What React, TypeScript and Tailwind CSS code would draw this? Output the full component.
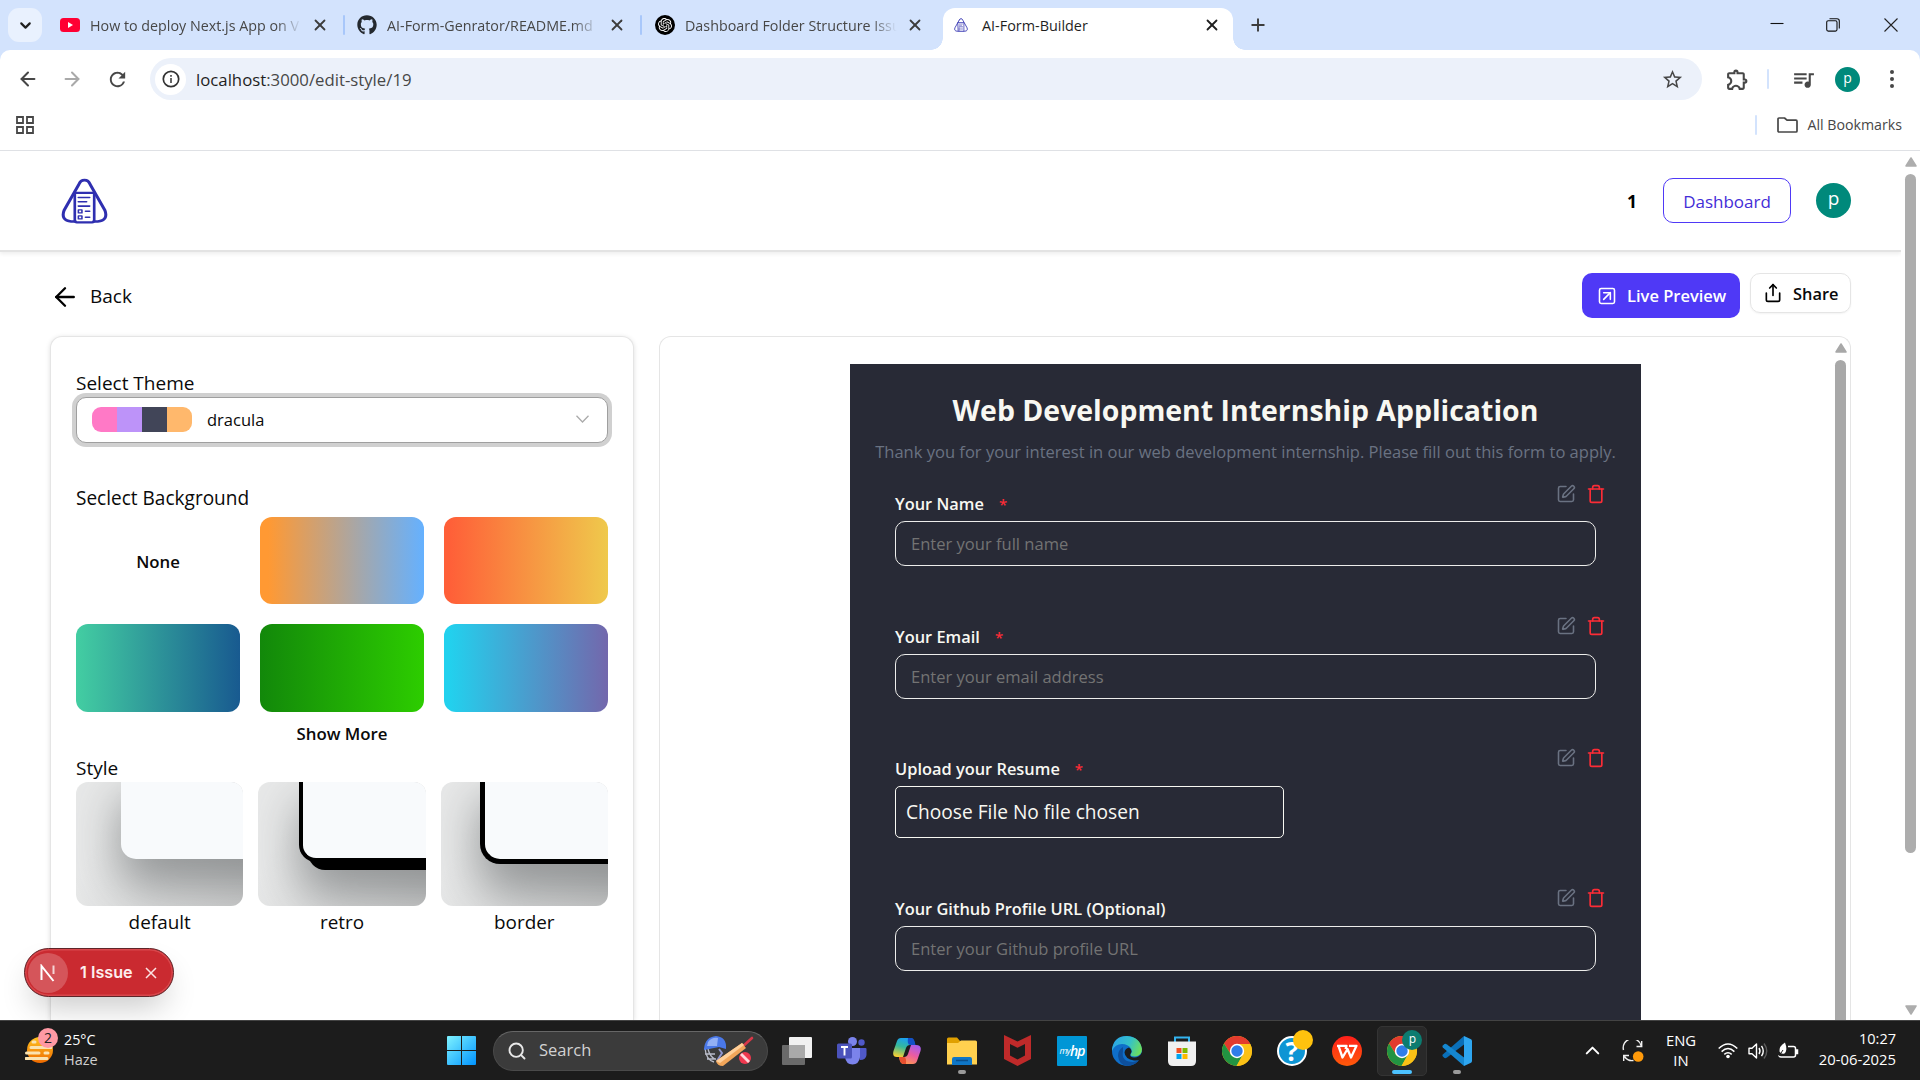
import type { ReactNode } from "react";
import {
  ArrowLeft,
  ArrowRight,
  ChevronDown,
  ChevronUp,
  Search,
  Share,
  SquareArrowUpRight,
  SquarePen,
  Trash,
  X,
} from "lucide-react";
import { FaGithub } from "react-icons/fa";
import { SiOpenai } from "react-icons/si";
import { MdOutlineExtension, MdQueueMusic, MdRefresh, MdStarBorder } from "react-icons/md";

/* ---------- logo ---------- */

function FormLogo({ className }: { className: string }) {
  return (
    <svg viewBox="0 0 46 54" preserveAspectRatio="none" className={className} fill="none" stroke="#2f2fb0" strokeLinecap="round" strokeLinejoin="round">
      <path d="M17.500 7.500Q19 2.500 23 2.500T28.500 7.500L43 38Q46.500 49.500 36 51H32M17.500 7.500L3 38Q-.5 49.500 10 51H14" strokeWidth="3" />
      <path d="M13.500 17.500H32.500V50Q32.500 52 30.500 52H15.500Q13.500 52 13.500 50Z" strokeWidth="2.600" />
      <path d="M17 23H28M17 28H25M17 33H28M24 39H28M24 46H28" strokeWidth="1.800" />
      <path d="M17 37.500H20.500V41H17ZM17 44.500H20.500V48H17Z" strokeWidth="1.500" />
    </svg>
  );
}

/* ---------- browser chrome ---------- */

function Tab({ icon, title, width }: { icon: ReactNode; title: string; width: string }) {
  return (
    <div className={`flex h-[34px] items-center ${width}`}>
      <div className="flex w-5 shrink-0 justify-center">{icon}</div>
      <div className="ml-[10px] w-[216px] shrink-0 whitespace-nowrap pt-px text-[14.300px] text-[#474747] [mask-image:linear-gradient(to_right,black_86%,transparent_98%)]">
        {title}
      </div>
      <X className="ml-[5px] size-[18px] shrink-0 text-[#3c3c3c]" strokeWidth={2.400} />
    </div>
  );
}

function TabDivider() {
  return <div className="h-5 w-[2px] rounded-full bg-[#a8c7fa]" />;
}

function TabStrip() {
  return (
    <div className="flex h-[50px] shrink-0 items-end bg-[#d3e3fd]">
      <div className="mb-2 flex w-[943px] items-center">
        <div className="ml-2 flex size-[34px] items-center justify-center rounded-[11px] bg-[#e9f1fe]">
          <ChevronDown className="size-[17px] text-[#1f1f1f]" strokeWidth={3} />
        </div>
        <div className="w-[18px]" />
        <Tab
          width="w-[283px]"
          title="How to deploy Next.js App on V"
          icon={
            <svg viewBox="0 0 20 14" className="h-[14px] w-5">
              <rect width="20" height="14" rx="3.500" fill="#ff0033" />
              <path d="M8 4L13 7L8 10Z" fill="#fff" />
            </svg>
          }
        />
        <TabDivider />
        <div className="w-[12px]" />
        <Tab width="w-[283px]" title="AI-Form-Genrator/README.md" icon={<FaGithub className="size-5 text-[#24292f]" />} />
        <TabDivider />
        <div className="w-[13px]" />
        <Tab
          width="w-[280px]"
          title="Dashboard Folder Structure Issu"
          icon={
            <span className="flex size-5 items-center justify-center rounded-full bg-black">
              <SiOpenai className="size-[14px] text-white" />
            </span>
          }
        />
      </div>
      <div className="relative flex h-[42px] w-[290px] items-center rounded-t-[12px] bg-white pb-2">
        <div className="absolute -left-3 bottom-0 size-3 bg-[radial-gradient(circle_at_0_0,transparent_11.500px,white_12px)]" />
        <div className="absolute -right-3 bottom-0 size-3 bg-[radial-gradient(circle_at_100%_0,transparent_11.500px,white_12px)]" />
        <FormLogo className="ml-[11px] h-[14px] w-[14px]" />
        <span className="ml-[14px] pt-px text-[14.400px] text-[#1f1f1f]">AI-Form-Builder</span>
        <X className="ml-auto mr-[12px] size-[18px] text-[#1f1f1f]" strokeWidth={2.400} />
      </div>
      <div className="mb-2 flex h-[34px] flex-1 items-center">
        <svg viewBox="0 0 14 14" className="ml-[18px] size-[14px]" stroke="#3c3c3c" strokeWidth="1.900">
          <path d="M7 .5V13.500M.5 7H13.500" />
        </svg>
      </div>
      <div className="mb-2 flex h-[34px] items-center">
        <svg viewBox="0 0 14 14" className="size-[14px]" stroke="#111" strokeWidth="1.100">
          <path d="M.5 5.500H13.500" />
        </svg>
        <svg viewBox="0 0 14 14" className="ml-[42px] size-[14px]" stroke="#111" strokeWidth="1.100" fill="none">
          <rect x=".7" y="2.800" width="10.300" height="10.300" rx="1.500" />
          <path d="M3.500 .7H11Q13.300 .7 13.300 3V10.500" />
        </svg>
        <svg viewBox="0 0 14 14" className="ml-[44px] mr-[22px] size-[14px]" stroke="#222" strokeWidth="1.100">
          <path d="M.5 .5L13.500 13.500M13.500 .5L.5 13.500" />
        </svg>
      </div>
    </div>
  );
}

function Toolbar() {
  return (
    <div className="shrink-0 bg-[#d3e3fd]">
      <div className="h-[101px] rounded-t-[10px] border-b border-[#dfe1e5] bg-white">
        <div className="flex h-[58px] items-center">
          <ArrowLeft className="ml-[17px] size-[22px] text-[#474747]" strokeWidth={2.200} />
          <ArrowRight className="ml-[22px] size-[22px] text-[#a9a9a9]" strokeWidth={2.200} />
          <MdRefresh className="ml-[23px] size-[23px] text-[#474747]" />
          <div className="ml-[21px] flex h-[42px] w-[1552px] items-center rounded-full bg-[#ecf1fa]">
            <div className="ml-[5px] flex size-[31px] items-center justify-center rounded-full bg-white">
              <svg viewBox="0 0 18 18" className="size-[18px]" fill="none" stroke="#333" strokeWidth="1.700">
                <circle cx="9" cy="9" r="7.700" />
                <path d="M9 8V13M9 5V6.700" strokeWidth="1.500" />
              </svg>
            </div>
            <span className="ml-[10px] pt-px text-[16.750px] text-[#474747]">
              <span className="text-[#1f1f1f]">localhost</span>:3000/edit-style/19
            </span>
            <MdStarBorder className="ml-auto mr-[18px] size-[23px] text-[#474747]" />
          </div>
          <MdOutlineExtension className="ml-[23px] size-[25px] text-[#474747]" />
          <div className="ml-[17px] h-5 w-[2px] rounded bg-[#d3e3fd]" />
          <MdQueueMusic className="ml-[22px] size-[25px] text-[#474747]" />
          <div className="ml-[19px] flex size-[25px] items-center justify-center rounded-full bg-[#00897b] pb-[3px] text-[14px] text-white">p</div>
          <svg viewBox="0 0 4 18" className="ml-[30px] h-[18px] w-1 text-[#474747]" fill="#474747">
            <circle cx="2" cy="2" r="2" />
            <circle cx="2" cy="9" r="2" />
            <circle cx="2" cy="16" r="2" />
          </svg>
        </div>
        <div className="flex h-[34px] items-center">
          <svg viewBox="0 0 18 18" className="ml-[16px] size-[18px]" fill="none" stroke="#474747" strokeWidth="1.800">
            <path d="M1 1H7V7H1ZM11 1H17V7H11ZM1 11H7V17H1ZM11 11H17V17H11Z" />
          </svg>
          <div className="ml-auto h-5 w-[2px] rounded bg-[#d3e3fd]" />
          <svg viewBox="0 0 21 16" className="ml-5 h-4 w-[21px]" fill="none" stroke="#474747" strokeWidth="1.700">
            <path d="M1 2Q1 1 2 1H7.500L10 3.200H19Q20 3.200 20 4.200V14Q20 15 19 15H2Q1 15 1 14Z" strokeLinejoin="round" />
          </svg>
          <span className="ml-[9px] mr-[18px] text-[14.200px] text-[#474747]">All Bookmarks</span>
        </div>
      </div>
    </div>
  );
}

/* ---------- page ---------- */

function PageHeader() {
  return (
    <div className="flex h-[101px] shrink-0 items-center border-b-2 border-[#e3e3e3] bg-white shadow-[0_2px_4px_rgba(0,0,0,0.07)]">
      <FormLogo className="ml-[61px] h-[46px] w-[47px]" />
      <span className="ml-auto pt-px text-[17.500px] font-bold text-black">1</span>
      <div className="ml-[26px] flex h-[45px] w-[128px] items-center justify-center rounded-[10px] border border-[#4f39f6] pt-[2px] text-[17px] font-medium text-[#432dd7]">
        Dashboard
      </div>
      <div className="ml-[25px] mr-[50px] flex size-[35px] items-center justify-center rounded-full bg-[#00897b] pb-[4px] text-[19px] text-white">p</div>
    </div>
  );
}

function ActionRow() {
  return (
    <div className="flex h-[84px] shrink-0 items-start pt-[21px]">
      <div className="ml-[50px] flex h-[47px] items-center">
        <ArrowLeft className="size-[30px] text-black" strokeWidth={1.900} />
        <span className="ml-[10px] text-[19px] text-[#0a0a0a]">Back</span>
      </div>
      <div className="ml-auto flex h-[45px] w-[158px] items-center rounded-[10px] bg-[#4f39f6] pl-[15px] text-white">
        <SquareArrowUpRight className="size-5" strokeWidth={1.900} />
        <span className="ml-[10px] pt-[2px] text-[16.500px] font-semibold">Live Preview</span>
      </div>
      <div className="ml-[10px] mr-[50px] flex h-10 w-[101px] items-center rounded-[10px] border border-[#e5e5e5] pl-[12px] shadow-[0_1px_2px_rgba(0,0,0,0.05)]">
        <Share className="size-5 text-black" strokeWidth={2} />
        <span className="ml-[10px] pt-[2px] text-[16.400px] font-semibold text-[#0a0a0a]">Share</span>
      </div>
    </div>
  );
}

const gradients = [
  "bg-[linear-gradient(90deg,#ff9933_5%,#65b1ff_100%)]",
  "bg-[linear-gradient(90deg,#ff5f38_3%,#efc94c_100%)]",
  "bg-[linear-gradient(90deg,#43cea2,#185a90)]",
  "bg-[linear-gradient(90deg,#12880a,#2dcd00)]",
  "bg-[linear-gradient(90deg,#22d1ee_3%,#7367ac_100%)]",
];

const stylePreviews = [
  {
    name: "default",
    pad: "pl-[45px]",
    panel: "h-[77px] rounded-bl-[15px] shadow-[4px_22px_46px_6px_rgba(80,84,86,0.5)]",
  },
  {
    name: "retro",
    pad: "pl-[41px]",
    panel: "h-[80px] rounded-bl-[17px] border-b-[4px] border-l-[4px] border-black shadow-[9px_8px_0_0_#000,6px_28px_46px_6px_rgba(80,84,86,0.5)]",
  },
  {
    name: "border",
    pad: "pl-[39px]",
    panel: "h-[82px] rounded-bl-[20px] border-b-[5px] border-l-[5px] border-black shadow-[4px_24px_46px_6px_rgba(80,84,86,0.5)]",
  },
];

function ThemePanel() {
  return (
    <div className="flex w-[584px] shrink-0 flex-col rounded-t-[12px] border-x border-t border-[#e5e5e5] bg-white px-[25px] pt-[32px] text-[#0a0a0a] shadow-[0_1px_5px_rgba(0,0,0,0.13)]">
      <div className="flex h-[28px] items-center text-[19px]">Select Theme</div>
      <div className="flex h-[46px] items-center rounded-[10px] border border-[#9f9f9f] bg-white pl-[15px] shadow-[0_0_0_4px_#d0d0d0]">
        <div className="mb-px flex h-[25px] overflow-hidden rounded-[9px]">
          <div className="w-[25px] bg-[#ff79c6]" />
          <div className="w-[25px] bg-[#bd93f9]" />
          <div className="w-[25px] bg-[#414558]" />
          <div className="w-[25px] bg-[#ffb86c]" />
        </div>
        <span className="ml-[15px] pt-px text-[16.500px]">dracula</span>
        <svg viewBox="0 0 13 8" className="mb-[2px] ml-auto mr-[18px] h-2 w-[13px]" fill="none" stroke="#ababab" strokeWidth="1.300">
          <path d="M.5 .7L6.500 7L12.500 .7" />
        </svg>
      </div>
      <div className="mt-[40px] flex h-[30px] items-center text-[19.050px]">Seclect Background</div>
      <div className="mt-[4px] grid grid-cols-3 grid-rows-[87px_88px] gap-x-5 gap-y-[20px]">
        <div className="flex items-center justify-center pt-[2px] text-[16.800px] font-semibold">None</div>
        {gradients.map((g) => (
          <div key={g} className={`rounded-[12px] ${g}`} />
        ))}
      </div>
      <div className="flex h-[43px] items-center justify-center text-[16.850px] font-semibold">Show More</div>
      <div className="flex h-[27px] items-center text-[19px]">Style</div>
      <div className="grid grid-cols-3 gap-x-[15px]">
        {stylePreviews.map((s) => (
          <div key={s.name} className="flex flex-col items-center">
            <div className={`h-[124px] w-full overflow-hidden rounded-[12px] bg-[linear-gradient(115deg,#e8e9e9_20%,#cfd0d0_100%)] ${s.pad}`}>
              <div className={`w-[190px] bg-[#f8fafc] ${s.panel}`} />
            </div>
            <div className="flex h-[33px] items-center text-[18.900px]">{s.name}</div>
          </div>
        ))}
      </div>
    </div>
  );
}

function FieldHeader({ label, required, iconOffset = "-mt-[2px]" }: { label: string; required?: boolean; iconOffset?: string }) {
  return (
    <div className="flex h-[36px] justify-between">
      <div className="flex h-[38px] items-center text-[16.400px] font-semibold text-[#f8f8f2]">
        {label}
        {required && <span className="ml-[15px] text-[15px] text-[#fb2c36]">*</span>}
      </div>
      <div className={`-mr-[10px] flex gap-[10px] ${iconOffset}`}>
        <SquarePen className="size-5 text-[#6a7282]" strokeWidth={1.900} />
        <Trash className="size-5 text-[#fb2c36]" strokeWidth={2} />
      </div>
    </div>
  );
}

function TextField(props: { label: string; placeholder: string; required?: boolean; iconOffset?: string }) {
  return (
    <div>
      <FieldHeader label={props.label} required={props.required} iconOffset={props.iconOffset} />
      <div className="flex h-[45px] items-center rounded-[10px] border border-[#ededeb] pl-[15px] pt-[2px] text-[16.550px] text-[#737373]">
        {props.placeholder}
      </div>
    </div>
  );
}

function FormPanel() {
  return (
    <div className="ml-[25px] flex w-[1192px] shrink-0 rounded-t-[12px] border-x border-t border-[#e5e5e5]">
      <div className="ml-[190px] mt-[27px] w-[791px] shrink-0 bg-[#282a36]">
        <h1 className="flex h-[73px] items-end justify-center text-[28.450px] font-bold leading-[54px] text-[#f8f8f2]">Web Development Internship Application</h1>
        <p className="flex h-[30px] items-center justify-center whitespace-nowrap text-[16.550px] text-[#6a7282]">
          Thank you for your interest in our web development internship. Please fill out this form to apply.
        </p>
        <div className="mx-[45px] mt-[18px] flex flex-col gap-[52px]">
          <TextField label="Your Name" placeholder="Enter your full name" required iconOffset="-mt-px" />
          <TextField label="Your Email" placeholder="Enter your email address" required />
          <div className="-mt-px">
            <FieldHeader label="Upload your Resume" required />
            <div className="flex h-[52px] w-[389px] items-center rounded-[5px] border border-[#f8f8f2] pl-[10px] pt-px text-[19.150px] text-[#f8f8f2]">
              Choose File No file chosen
            </div>
          </div>
          <TextField label="Your Github Profile URL (Optional)" placeholder="Enter your Github profile URL" />
        </div>
      </div>
      <div className="ml-auto mr-[3px] flex w-[12px] flex-col pt-[6px]">
        <svg viewBox="0 0 12 10" className="h-[10px] w-3">
          <path d="M6 1L11 9H1Z" fill="#a8a8a8" stroke="#a8a8a8" strokeWidth="1.500" strokeLinejoin="round" />
        </svg>
        <div className="mt-[7px] w-[11px] flex-1 rounded-t-full bg-[#a8a8a8]" />
      </div>
    </div>
  );
}

function PageScrollbar() {
  return (
    <div className="flex w-[19px] shrink-0 flex-col items-center bg-white pt-[6px]">
      <svg viewBox="0 0 12 10" className="h-[10px] w-3">
        <path d="M6 1L11 9H1Z" fill="#adadad" stroke="#adadad" strokeWidth="1.500" strokeLinejoin="round" />
      </svg>
      <div className="mt-[7px] h-[679px] w-[11px] rounded-full bg-[#adadad]" />
      <svg viewBox="0 0 12 10" className="mb-[5px] mt-auto h-[10px] w-3">
        <path d="M6 9L11 1H1Z" fill="#adadad" stroke="#adadad" strokeWidth="1.500" strokeLinejoin="round" />
      </svg>
    </div>
  );
}

function IssueBadge() {
  return (
    <div className="absolute bottom-[23px] left-6 flex h-[49px] w-[150px] items-center rounded-full border-[1.500px] border-[#5e2428] bg-[#ca2a30] shadow-[inset_0_0_0_1.500px_#d8474c,0_16px_32px_-8px_rgba(0,0,0,0.24)]">
      <div className="ml-[3px] flex size-[40px] items-center justify-center rounded-full bg-[#d5555a]">
        <svg viewBox="0 0 18 18" className="size-[18px]" fill="none" stroke="#fff" strokeWidth="2">
          <path d="M2.500 16V2L14.500 17" />
          <path d="M14.500 1.500V10" opacity=".75" />
        </svg>
      </div>
      <span className="ml-[12px] font-['Inter'] text-[16.200px] font-semibold text-[#fdeeee]">1 Issue</span>
      <svg viewBox="0 0 12 12" className="ml-[12px] size-[12px]" stroke="#fbe4e4" strokeWidth="1.500">
        <path d="M1 1L11 11M11 1L1 11" />
      </svg>
    </div>
  );
}

/* ---------- taskbar ---------- */

function ChromeIcon() {
  return (
    <svg viewBox="0 0 30 30" className="size-[30px]">
      <circle cx="15" cy="15" r="15" fill="#fbc116" />
      <path d="M15 8H28.300A15 15 0 0 0 2 7.500L9 18.500Z" fill="#e33b2e" />
      <path d="M2 7.500A15 15 0 0 0 14.500 30L21 18.500L15 22L9 18.500Z" fill="#229342" />
      <path d="M21 18.500L14.500 30A15 15 0 0 0 28.300 8H15Z" fill="#fbc116" />
      <circle cx="15" cy="15" r="7.200" fill="#fff" />
      <circle cx="15" cy="15" r="5.700" fill="#2f7de9" />
    </svg>
  );
}

function WindowsIcon() {
  return (
    <svg viewBox="0 0 29 29" className="size-[29px]">
      <defs>
        <linearGradient id="win" x1="0" y1="0" x2="1" y2="1">
          <stop offset="0" stopColor="#7ff3ff" />
          <stop offset="1" stopColor="#0093ff" />
        </linearGradient>
      </defs>
      <path d="M1 0H14V14H0V1Q0 0 1 0ZM15 0H28Q29 0 29 1V14H15ZM0 15H14V29H1Q0 29 0 28ZM15 15H29V28Q29 29 28 29H15Z" fill="url(#win)" />
    </svg>
  );
}

function CricketArt() {
  return (
    <svg viewBox="0 0 52 32" className="h-8 w-[52px]">
      <path d="M2 13Q3 25 11 27M5 14Q7 22 12 24M2 19H12M4 24H13" stroke="#b9bcc9" strokeWidth="1.300" fill="none" />
      <path d="M16 14L19 18L14 26" stroke="#8f97cf" strokeWidth="2" fill="none" />
      <path d="M1 14Q2 2 13 1Q24 2 23 14L16 12L1 15Z" fill="#4a78e8" />
      <path d="M5 7Q9 2 15 3L14 11H4Z" fill="#93b0f5" />
      <path d="M38 13L49 3" stroke="#d83848" strokeWidth="2.600" strokeLinecap="round" />
      <path d="M39 8L43 13L20 31Q14 31 13 26Z" fill="#f2a65a" />
      <path d="M39 8L41 10L17 28L13 26Z" fill="#ffd09a" />
      <circle cx="42" cy="23" r="6" fill="#f0384e" />
      <path d="M38 19L46 27" stroke="#ffd5da" strokeWidth="2.800" />
    </svg>
  );
}

function TaskViewIcon() {
  return (
    <svg viewBox="0 0 30 28" className="h-7 w-[30px]">
      <rect x="7" width="23" height="21" rx="1" fill="#f1f1f1" />
      <rect y="8" width="23" height="20" rx="1" fill="#6a6a6a" />
      <path d="M7 8H23V21H7Z" fill="#a9a9a9" />
    </svg>
  );
}

function TeamsIcon() {
  return (
    <svg viewBox="0 0 30 28" className="h-7 w-[30px]">
      <circle cx="24.500" cy="5.500" r="3.200" fill="#5059c9" />
      <path d="M20 11H28.500Q29.500 11 29.500 12V18Q29 23 23 23Z" fill="#5059c9" />
      <circle cx="15.500" cy="4.500" r="4.500" fill="#7b83eb" />
      <path d="M8 11H23V20Q22 27.500 15.500 27.500T8 20Z" fill="#7b83eb" />
      <rect y="6.500" width="15" height="15" rx="1.500" fill="#4b53bc" />
      <path d="M4 10H11M7.500 10V18.500" stroke="#fff" strokeWidth="1.900" />
    </svg>
  );
}

function CopilotIcon() {
  return (
    <svg viewBox="0 0 28 28" className="size-7">
      <defs>
        <linearGradient id="cpA" x1="0.500" y1="0" x2="0.200" y2="1">
          <stop offset="0" stopColor="#1aa0f2" />
          <stop offset=".45" stopColor="#35b99a" />
          <stop offset="1" stopColor="#ffd02f" />
        </linearGradient>
        <linearGradient id="cpB" x1="0.800" y1="0" x2="0.300" y2="1">
          <stop offset="0" stopColor="#a35cf2" />
          <stop offset=".5" stopColor="#ec5ca0" />
          <stop offset="1" stopColor="#ff9a4d" />
        </linearGradient>
      </defs>
      <path d="M8 1H18Q20 1 21 4L22 8H17Q14 8 13 11L10 20H4Q-1 20 .5 14L4 4Q5 1 8 1Z" fill="url(#cpA)" />
      <path d="M15 1H18.500Q20.500 1 21.500 4L22.500 8H17Q14 8 15 1Z" fill="#1450c8" />
      <path d="M18 8H23Q29 8 27.500 14L24 24Q23 27 20 27H10Q8 27 7 24L6 20H11Q14 20 15 17Z" fill="url(#cpB)" />
      <path d="M6 20H11Q13.500 20 13 27H10Q8 27 7 24Z" fill="#e8502f" />
    </svg>
  );
}

function FolderIcon() {
  return (
    <svg viewBox="0 0 30 28" className="h-7 w-[30px]">
      <path d="M0 2Q0 .5 1.500 .5H10L13 4H15V10H0Z" fill="#e0a000" />
      <path d="M0 6H11L14 3.500H28.500Q30 3.500 30 5V27.500H0Z" fill="#ffd04f" />
      <path d="M5 28V22Q5 20 7 20H23Q25 20 25 22V28Z" fill="#0f76c6" />
      <path d="M9 23.500H21" stroke="#0a4f8c" strokeWidth="1.500" />
    </svg>
  );
}

function McAfeeIcon() {
  return (
    <svg viewBox="0 0 27 31" className="h-[31px] w-[27px]">
      <path d="M0 0L13.500 6.500L27 0V24L13.500 31L0 24ZM6 9V20.500L13.500 24.500L21 20.500V9L13.500 12.800Z" fill="#bf2a2a" fillRule="evenodd" />
    </svg>
  );
}

function EdgeIcon() {
  return (
    <svg viewBox="0 0 30 30" className="size-[30px]">
      <defs>
        <linearGradient id="edT" x1="0" y1="0.300" x2="1" y2="0.600">
          <stop offset="0" stopColor="#2aa5e8" />
          <stop offset=".55" stopColor="#35c1c8" />
          <stop offset="1" stopColor="#6fe05a" />
        </linearGradient>
      </defs>
      <circle cx="15" cy="15" r="15" fill="#0f6fc9" />
      <path d="M11 15Q9 26 21 26Q25 26 28 23Q23 30 15 30Q7 29 6 20Q6 14 11 11Z" fill="#0d4f9c" />
      <path d="M0 13Q2 0 15 0Q28 1 30 13Q30 20 23 20.500Q18 20.500 18.500 18Q21 16 19 12.500Q16 8 10 8Q3 8 0 15Z" fill="url(#edT)" />
      <path d="M18.500 18Q17 21 22 21.500Q28 21.500 30.500 15L30.500 22Q27 25 22 24.500Q13 23 12.500 16.500Q13 12.500 17 11.500Q21 14 18.500 18Z" fill="#1c1c1c" />
    </svg>
  );
}

function StoreIcon() {
  return (
    <svg viewBox="0 0 30 30" className="size-[30px]">
      <path d="M8 6V1.500H22V6" fill="none" stroke="#33b4f0" strokeWidth="2" />
      <path d="M1 5.500H29V25Q29 30 24 30H6Q1 30 1 25Z" fill="#f0f0f0" />
      <rect x="9.500" y="12" width="5" height="5" fill="#f25022" />
      <rect x="15.500" y="12" width="5" height="5" fill="#7fba00" />
      <rect x="9.500" y="18" width="5" height="5" fill="#00a4ef" />
      <rect x="15.500" y="18" width="5" height="5" fill="#ffb900" />
    </svg>
  );
}

function HelpIcon() {
  return (
    <div className="relative flex size-[30px] items-center justify-center rounded-full border-[2px] border-white bg-[#0d95d4] text-[27px] font-bold leading-[26px] text-white">
      ?
      <div className="absolute -right-[8px] -top-[8px] size-5 rounded-full bg-[#ffc20e]" />
    </div>
  );
}

function WpsIcon() {
  return (
    <svg viewBox="0 0 30 30" className="size-[30px]">
      <defs>
        <linearGradient id="wps" x1="0" y1="0" x2="0" y2="1">
          <stop offset="0" stopColor="#ff1f1a" />
          <stop offset="1" stopColor="#ff5a0a" />
        </linearGradient>
      </defs>
      <circle cx="15" cy="15" r="15" fill="url(#wps)" />
      <path d="M5 9.800H14.500L13.500 13M6.500 10L10.500 21.500L15.500 13L19 21.500L24.500 9.800H17" fill="none" stroke="#fff" strokeWidth="2.300" strokeLinejoin="round" />
    </svg>
  );
}

function VsCodeIcon() {
  return (
    <svg viewBox="0 0 30 30" className="size-[30px]">
      <path d="M22 0L.8 18.500Q0 19.500 .8 20.500L2.500 22Q3.500 22.500 5 21.500L24 7Z" fill="#0a6fb8" />
      <path d="M22 30L.8 11.500Q0 10.500 .8 9.500L2.500 8Q3.500 7.500 5 8.500L24 23Z" fill="#1587d0" />
      <path d="M22 0L28.500 3Q30 3.700 30 5V25Q30 26.300 28.500 27L22 30Z" fill="#2ea6f0" />
    </svg>
  );
}

function TaskItem({ children, indicator }: { children: ReactNode; indicator?: string }) {
  return (
    <div className="relative flex h-[60px] w-[54.950px] items-center justify-center">
      {children}
      {indicator && <div className={`absolute bottom-[7px] h-1 rounded-full ${indicator}`} />}
    </div>
  );
}

function Taskbar() {
  return (
    <div className="flex h-[60px] shrink-0 items-center border-t border-[#434343] bg-[#1c1c1c]">
      <div className="relative ml-[25px] mt-[-4px]">
        <svg viewBox="0 0 28 30" className="h-[30px] w-7">
          <defs>
            <linearGradient id="sun" x1="0" y1="0" x2="0" y2="1">
              <stop offset="0" stopColor="#ffc31f" />
              <stop offset="1" stopColor="#ee6a00" />
            </linearGradient>
          </defs>
          <circle cx="15" cy="16" r="13" fill="url(#sun)" />
          <path d="M8 8H10M6 13.500H26M1.500 19H14M20 19H23M1 24.500H22" stroke="#fbe3b0" strokeWidth="3" strokeLinecap="round" />
        </svg>
        <div className="absolute -right-[5px] -top-[6px] flex size-5 items-center justify-center rounded-full bg-[#ff99a4] text-[14px] text-[#222]">2</div>
      </div>
      <div className="-mt-px ml-[11px] flex flex-col leading-5">
        <span className="text-[14.300px] text-white">25°C</span>
        <span className="text-[14.500px] text-[#cfcfcf]">Haze</span>
      </div>
      <div className="ml-auto flex w-[1038px] items-center">
        <WindowsIcon />
        <div className="ml-[17px] flex h-10 w-[275px] items-center rounded-full border border-[#4a4a4a] border-t-[#666] bg-[#3b3b3b]">
          <Search className="ml-[13px] size-5 text-[#e8e8e8]" strokeWidth={2.300} />
          <span className="ml-[12px] text-[16.500px] text-[#d2d2d2]">Search</span>
          <div className="ml-auto mr-[12px]">
            <CricketArt />
          </div>
        </div>
        <div className="ml-[2px] flex">
          <TaskItem><TaskViewIcon /></TaskItem>
          <TaskItem><TeamsIcon /></TaskItem>
          <TaskItem><CopilotIcon /></TaskItem>
          <TaskItem indicator="w-2 bg-[#9a9a9a]"><FolderIcon /></TaskItem>
          <TaskItem><McAfeeIcon /></TaskItem>
          <TaskItem>
            <div className="flex size-[30px] items-center justify-center rounded-[1px] bg-[#0096d6] italic tracking-tighter text-white">
              <span className="text-[9px]">my</span>
              <span className="text-[14px] font-semibold">hp</span>
            </div>
          </TaskItem>
          <TaskItem><EdgeIcon /></TaskItem>
          <TaskItem><StoreIcon /></TaskItem>
          <TaskItem><ChromeIcon /></TaskItem>
          <TaskItem><HelpIcon /></TaskItem>
          <TaskItem><WpsIcon /></TaskItem>
          <TaskItem indicator="w-5 bg-[#4cc2ff]">
            <div className="flex size-[50px] shrink-0 items-center justify-center rounded-[5px] border border-[#343434] bg-[#292929]">
              <ChromeIcon />
            </div>
            <div className="absolute left-[28px] top-[9px] flex size-5 items-center justify-center rounded-full bg-[#0c7c70] pb-[2px] text-[12px] text-white">p</div>
          </TaskItem>
          <TaskItem indicator="w-2 bg-[#9a9a9a]"><VsCodeIcon /></TaskItem>
        </div>
      </div>
      <div className="flex w-[435px] items-center justify-end">
        <ChevronUp className="size-[23px] text-white" strokeWidth={2.100} />
        <svg viewBox="0 0 22 22" className="ml-[18px] size-[22px]" fill="none" stroke="#f0f0f0" strokeWidth="1.400">
          <path d="M1.500 10A9 9 0 0 1 19 5.500M19.700 1V6.500H14.500M1.700 21V15.500H7M2.500 16.500Q6 21.500 11.500 20.500" />
          <circle cx="16.200" cy="16.500" r="5.300" fill="#ff9a0a" stroke="none" />
        </svg>
        <div className="-mt-[2px] ml-[19px] flex w-[36px] flex-col items-center text-[14.800px] leading-5 text-white">
          <span>ENG</span>
          <span>IN</span>
        </div>
        <svg viewBox="0 0 20 16" className="ml-[19px] h-4 w-5" fill="none" stroke="#fff" strokeWidth="1.500">
          <path d="M.7 5.500Q10-3.500 19.300 5.500M3.600 8.600Q10 2.500 16.400 8.600M6.300 11.400Q10 8 13.700 11.400" />
          <circle cx="10" cy="13.500" r="1.800" fill="#fff" stroke="none" />
        </svg>
        <svg viewBox="0 0 20 18" className="ml-[10px] h-[18px] w-5" fill="none" stroke="#fff" strokeWidth="1.400">
          <path d="M1 6.200H4L8.500 2V16L4 11.800H1Z" strokeLinejoin="round" />
          <path d="M11 6Q13 9 11 12M13.500 3.800Q17 9 13.500 14.200" />
          <path d="M16 1.500Q21.500 9 16 16.500" stroke="#5a5a5a" />
        </svg>
        <svg viewBox="0 0 21 18" className="ml-[10px] h-[18px] w-[21px]" fill="none" stroke="#fff" strokeWidth="1.500">
          <path d="M10 4.500H15.500Q17.500 4.500 17.500 6.500V13Q17.500 15 15.500 15H3Q1 15 1 13" />
          <path d="M18 8H19.500V11.500H18Z" fill="#fff" />
          <path d="M7 .5Q10 8 6.500 11.500Q3 12.500 1.500 9.500Q1 4 7 .5Z" fill="#fff" stroke="none" />
          <path d="M1 14L5 8" stroke="#1c1c1c" strokeWidth="1" />
        </svg>
        <div className="-mt-[3px] ml-[19px] mr-[24px] flex w-[78px] flex-col items-end text-[14.800px] leading-5 text-white">
          <span className="text-[14.500px]">10:27</span>
          <span className="whitespace-nowrap">20-06-2025</span>
        </div>
      </div>
    </div>
  );
}

export default function App() {
  return (
    <div className="flex h-[1080px] w-[1920px] flex-col overflow-hidden bg-white font-['Open_Sans',sans-serif]">
      <TabStrip />
      <Toolbar />
      <div className="relative flex min-h-0 flex-1 overflow-hidden">
        <div className="flex w-[1901px] shrink-0 flex-col">
          <PageHeader />
          <ActionRow />
          <div className="flex min-h-0 flex-1 pl-[50px]">
            <ThemePanel />
            <FormPanel />
          </div>
        </div>
        <PageScrollbar />
        <IssueBadge />
      </div>
      <Taskbar />
    </div>
  );
}
